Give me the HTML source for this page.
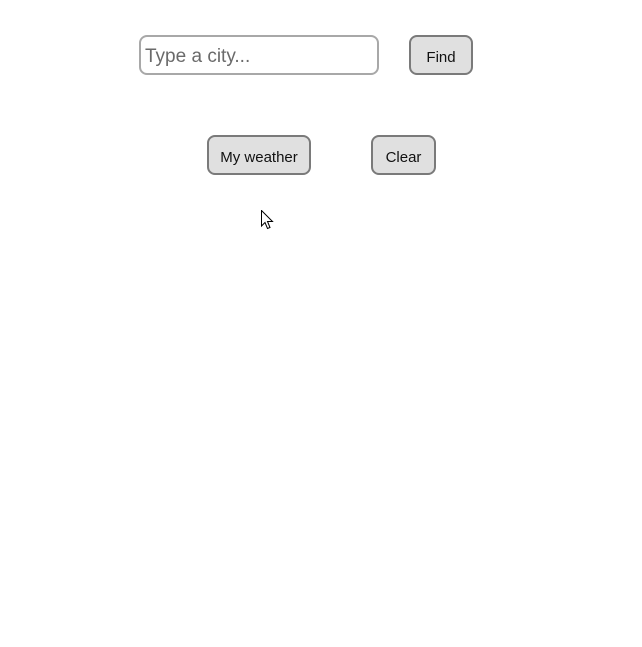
<!DOCTYPE html>
<html><head><meta charset="utf-8"><style>
html,body{margin:0;padding:0;background:#fff;width:642px;height:647px;overflow:hidden;font-family:"Comic Sans MS","Liberation Sans",sans-serif;}
.inp{position:absolute;left:139px;top:35px;width:236px;height:36px;border:2px solid #a8a8a8;border-radius:8px;box-sizing:content-box;}
.inp span{position:absolute;left:4px;top:9px;font-size:19px;color:#6a6a6a;}
.btn{position:absolute;height:36px;border:2px solid #7a7a7a;border-radius:8px;background:#e0e0e0;font-size:15px;color:#111;text-align:center;line-height:42px;}
</style></head><body>
<div class="inp"><span>Type a city...</span></div>
<div class="btn" style="left:409px;top:35px;width:60px;">Find</div>
<div class="btn" style="left:207px;top:135px;width:100px;">My weather</div>
<div class="btn" style="left:371px;top:135px;width:61px;">Clear</div>
<svg style="position:absolute;left:261px;top:210px" width="14" height="22" viewBox="0 0 14 22"><path d="M0.5 0.5 L0.5 16 L4 12.5 L6.5 18.5 L9 17.5 L6.5 11.5 L11.5 11.5 Z" fill="#fff" stroke="#000" stroke-width="1"/></svg>
</body></html>
